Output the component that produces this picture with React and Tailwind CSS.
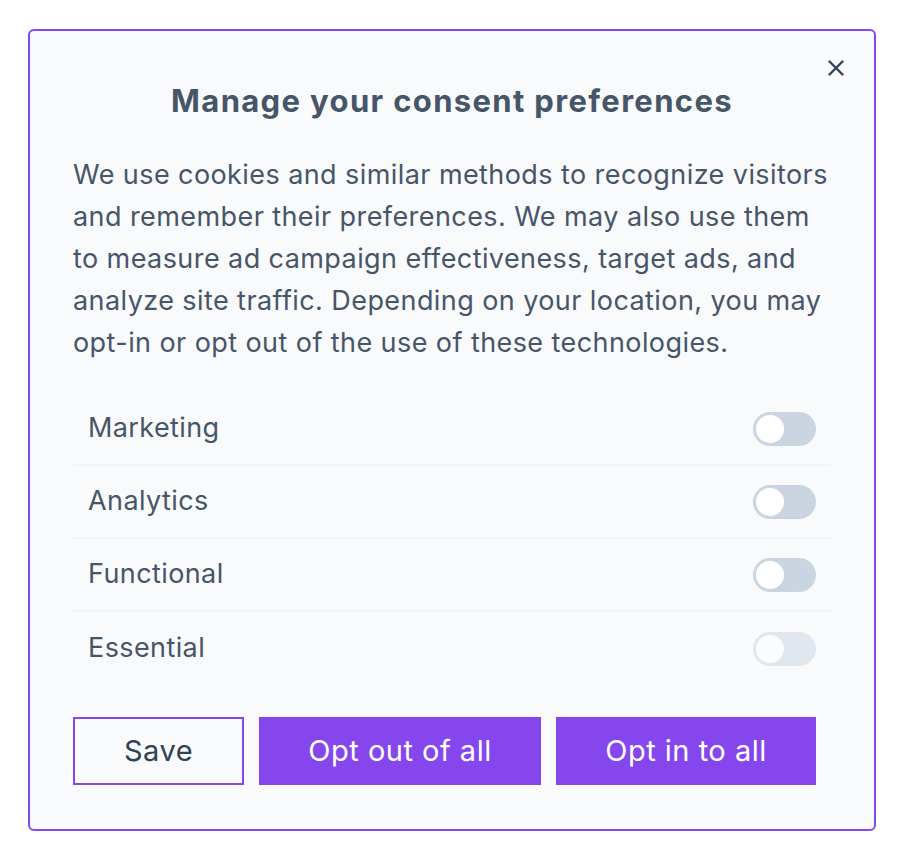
import { useState } from "react";

const ROWS = [
  { name: "Marketing", disabled: false },
  { name: "Analytics", disabled: false },
  { name: "Functional", disabled: false },
  { name: "Essential", disabled: true },
];

function Toggle({ on, disabled, onClick }) {
  return (
    <button
      type="button"
      onClick={disabled ? undefined : onClick}
      className={`flex h-[34px] w-[63px] items-center rounded-full p-[3px] ${on ? "bg-[#8646ee]" : "bg-[#cbd5e1]"} ${disabled ? "opacity-50" : ""}`}
    >
      <span className={`h-[28px] w-[28px] rounded-full bg-white ${on ? "ml-auto" : ""}`} />
    </button>
  );
}

export default function App() {
  const [state, setState] = useState({ Marketing: false, Analytics: false, Functional: false, Essential: false });

  return (
    <div className="min-h-screen bg-white px-[28px] pt-[29px] font-['Inter',sans-serif]">
      <div className="relative w-[848px] rounded-md border-2 border-[#8646ee] bg-[#f8fafc] px-[43px] pb-[44px] pt-[58px]">
        <button type="button" className="absolute right-[30px] top-[29px] text-[#334155]">
          <svg width="16" height="16" viewBox="0 0 16 16" fill="none" stroke="currentColor" strokeWidth="2.4" strokeLinecap="round">
            <path d="M1.5 1.5l13 13M14.5 1.5l-13 13" />
          </svg>
        </button>
        <h2 className="-mt-[6px] text-center text-[31px] font-bold leading-[36px] tracking-[1.35px] text-[#475569]">
          Manage your consent preferences
        </h2>
        <p className="mt-[35px] text-[27px] leading-[42px] tracking-[0.42px] text-[#475569]">
          We use cookies and similar methods to recognize visitors and remember their preferences. We may also use them
          to measure ad campaign effectiveness, target ads, and analyze site traffic. Depending on your location, you may
          opt-in or opt out of the use of these technologies.
        </p>
        <div className="mt-[29px]">
          {ROWS.map((r, i) => (
            <div
              key={r.name}
              className={`flex h-[73px] items-center justify-between pl-[15px] pr-[15px] ${i < ROWS.length - 1 ? "border-b-2 border-[#eff5fc]" : ""}`}
            >
              <span className="text-[27px] tracking-[0.4px] text-[#475569]">{r.name}</span>
              <Toggle
                on={state[r.name]}
                disabled={r.disabled}
                onClick={() => setState((s) => ({ ...s, [r.name]: !s[r.name] }))}
              />
            </div>
          ))}
        </div>
        <div className="mt-[32px] flex gap-[15px]">
          <button type="button" className="h-[68px] w-[171px] border-2 border-[#8646ee] bg-transparent text-[29px] tracking-[0.5px] text-[#334155]">
            Save
          </button>
          <button type="button" className="h-[68px] w-[282px] bg-[#8646ee] text-[29px] tracking-[0.5px] text-white">
            Opt out of all
          </button>
          <button type="button" className="h-[68px] w-[260px] bg-[#8646ee] text-[29px] tracking-[0.5px] text-white">
            Opt in to all
          </button>
        </div>
      </div>
    </div>
  );
}
